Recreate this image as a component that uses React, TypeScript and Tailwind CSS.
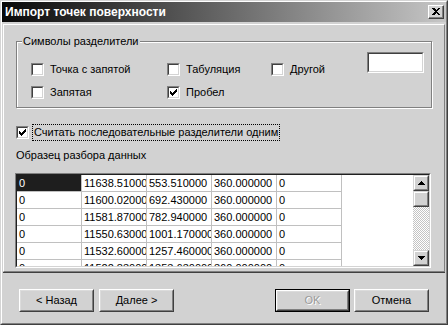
import React from 'react';

const rows = [
  ['0', '11638.510000', '553.510000', '360.000000', '0'],
  ['0', '11600.020000', '692.430000', '360.000000', '0'],
  ['0', '11581.870000', '782.940000', '360.000000', '0'],
  ['0', '11550.630000', '1001.170000', '360.000000', '0'],
  ['0', '11532.600000', '1257.460000', '360.000000', '0'],
  ['0', '11522.830000', '1353.630000', '360.000000', '0'],
];

function Check({ checked }: { checked?: boolean }) {
  return (
    <span className="flex h-[13px] w-[13px] shrink-0 border border-t-[#808080] border-l-[#808080] border-b-white border-r-white">
      <span className="flex flex-1 items-center justify-center border border-t-[#404040] border-l-[#404040] border-b-[#d4d4d4] border-r-[#d4d4d4] bg-white">
        {checked && (
          <svg width="7" height="7" viewBox="0 0 7 7" shapeRendering="crispEdges">
            <polygon points="0,2 2,4 7,-1 7,2 2,7 0,5" fill="#000" />
          </svg>
        )}
      </span>
    </span>
  );
}

function Option({ label, checked }: { label: string; checked?: boolean }) {
  return (
    <div className="flex h-[13px] items-center">
      <Check checked={checked} />
      <span className="ml-[6px] whitespace-nowrap">{label}</span>
    </div>
  );
}

function Button({ children, def, disabled, className = '' }: { children: React.ReactNode; def?: boolean; disabled?: boolean; className?: string }) {
  return (
    <div className={`h-[23px] w-[75px] ${def ? 'border border-black' : ''} ${className}`}>
      <div className="h-full border border-t-white border-l-white border-r-[#404040] border-b-[#404040]">
        <div className={`flex h-full items-center justify-center border border-t-[#dcdcdc] border-l-[#dcdcdc] border-r-[#808080] border-b-[#808080] ${disabled ? 'text-[#9a9a9a] [text-shadow:1px_1px_0_#fff]' : ''}`}>
          {children}
        </div>
      </div>
    </div>
  );
}

function ScrollBtn({ up }: { up?: boolean }) {
  return (
    <div className="h-[16px] w-[16px] border border-t-[#d4d4d4] border-l-[#d4d4d4] border-r-[#404040] border-b-[#404040]">
      <div className="flex h-full items-center justify-center border border-t-white border-l-white border-r-[#808080] border-b-[#808080] bg-[#d2d2d2]">
        {up !== undefined && (
          <svg width="7" height="4" viewBox="0 0 7 4" shapeRendering="crispEdges">
            <polygon points={up ? '3.5,0 7,4 0,4' : '0,0 7,0 3.5,4'} fill="#000" />
          </svg>
        )}
      </div>
    </div>
  );
}

export default function App() {
  return (
    <div className="h-[325px] w-[448px] border border-t-[#d4d4d4] border-l-[#d4d4d4] border-r-[#404040] border-b-[#404040] bg-[#d2d2d2] font-['Liberation_Sans',Arial,sans-serif] text-[11px] leading-[13px] text-black">
      <div className="flex h-full flex-col border border-t-white border-l-white border-r-[#808080] border-b-[#808080]">
        {/* title bar */}
        <div className="flex h-[20px] items-center bg-[linear-gradient(to_right,#080808,#c6c6c6)] pl-[3px] pr-[2px]">
          <span className="text-[12px] font-bold text-white">Импорт точек поверхности</span>
          <div className="ml-auto h-[14px] w-[16px] border border-t-white border-l-white border-r-[#404040] border-b-[#404040]">
            <div className="flex h-full items-center justify-center border-r border-b border-r-[#808080] border-b-[#808080] bg-[#d2d2d2]">
              <svg width="8" height="7" viewBox="0 0 8 7" shapeRendering="crispEdges">
                <path d="M0 0h2l2 2 2-2h2L5 3.5 8 7H6L4 5 2 7H0l3-3.5z" fill="#000" />
              </svg>
            </div>
          </div>
        </div>

        {/* main panel */}
        <div className="mx-[1px] mt-[2px] h-[248px] border border-t-white border-l-white border-r-[#808080] border-b-[#808080] shadow-[0_1px_0_#404040]">
          <div className="relative ml-[12px] mt-[16px] h-[67px] w-[416px] border border-[#808080] shadow-[1px_1px_0_#fff,inset_1px_1px_0_#fff]">
            <span className="absolute left-[5px] top-[-7px] bg-[#d2d2d2] px-[1px]">Символы разделители</span>
            <div className="flex pl-[14px] pt-[10px]">
              <div className="mt-[11px] grid grid-cols-[136px_104px_96px] gap-y-[10px]">
                <Option label="Точка с запятой" />
                <Option label="Табуляция" />
                <Option label="Другой" />
                <Option label="Запятая" />
                <Option label="Пробел" checked />
              </div>
              <div className="h-[21px] w-[57px] border border-t-[#808080] border-l-[#808080] border-b-white border-r-white">
                <div className="h-full border border-t-[#404040] border-l-[#404040] border-b-[#d4d4d4] border-r-[#d4d4d4] bg-white" />
              </div>
            </div>
          </div>

          <div className="ml-[12px] mt-[16px] flex h-[17px] items-center">
            <Check checked />
            <span className="ml-[3px] border border-dotted border-black px-[1px] leading-[15px]">
              Считать последовательные разделители одним
            </span>
          </div>

          <div className="ml-[12px] mt-[8px]">Образец разбора данных</div>

          <div className="ml-[11px] mt-[11px] h-[95px] w-[416px] border border-t-[#808080] border-l-[#808080] border-b-white border-r-white">
            <div className="flex h-full border border-t-[#202020] border-l-[#202020] border-b-[#d4d4d4] border-r-[#d4d4d4] bg-white">
              <div className="flex-1 overflow-hidden">
                {rows.map((r, i) => (
                  <div key={i} className="flex h-[17px] w-[325px] border-b border-[#c0c0c0]">
                    {r.map((c, j) => (
                      <div
                        key={j}
                        className={`w-[65px] overflow-hidden whitespace-nowrap border-r border-[#c0c0c0] pl-[2px] leading-[16px] ${i === 0 && j === 0 ? 'bg-[#1e1e1e] text-white' : ''}`}
                      >
                        {c}
                      </div>
                    ))}
                  </div>
                ))}
              </div>
              <div className="flex w-[16px] flex-col">
                <ScrollBtn up />
                <ScrollBtn />
                <div className="flex-1 bg-[repeating-conic-gradient(#ffffff_0_25%,#c4c4c4_0_50%)] bg-[length:2px_2px]" />
                <ScrollBtn up={false} />
              </div>
            </div>
          </div>
        </div>

        {/* buttons */}
        <div className="mt-[17px] flex pl-[17px]">
          <Button>&lt; Назад</Button>
          <Button className="ml-[5px]">Далее &gt;</Button>
          <Button def disabled className="ml-[101px]">OK</Button>
          <Button className="ml-[4px]">Отмена</Button>
        </div>
      </div>
    </div>
  );
}
